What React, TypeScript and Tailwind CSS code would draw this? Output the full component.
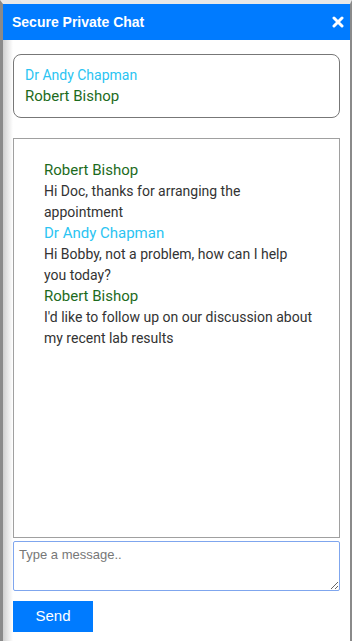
// Lines kept as they wrap in the chat window
const messages = [
  { from: "patient", name: "Robert Bishop", lines: ["Hi Doc, thanks for arranging the", "appointment"] },
  { from: "doctor", name: "Dr Andy Chapman", lines: ["Hi Bobby, not a problem, how can I help", "you today?"] },
  { from: "patient", name: "Robert Bishop", lines: ["I'd like to follow up on our discussion about", "my recent lab results"] },
];

const nameColor = (from: string) =>
  from === "doctor" ? "text-[#2bc4f2]" : "text-[#1d6b1d]";

function CloseIcon() {
  return (
    <svg viewBox="0 0 12 12" className="h-[12px] w-[12px]" fill="none" stroke="white" strokeWidth={3} strokeLinecap="round">
      <path d="M2 2l8 8M10 2l-8 8" />
    </svg>
  );
}

export default function App() {
  return (
    <div className="h-[641px] w-[352px] bg-white font-['Roboto',sans-serif]">
      <div className="flex h-full flex-col border-t-[4px] border-r-2 border-l-[3px] border-t-[#e8e8e8] border-r-[#8a8a8a] border-l-[#8a8a8a]">
        {/* header */}
        <div className="flex h-9 shrink-0 items-center justify-between bg-[#007bff] pr-[6px] pl-[9px]">
          <span className="font-['Liberation_Sans',sans-serif] text-[14px] font-bold text-white">
            Secure Private Chat
          </span>
          <CloseIcon />
        </div>

        <div className="flex flex-1 flex-col bg-[linear-gradient(to_right,#cfcfcf,#ffffff_10px)] px-[10px] pt-[14px]">
          {/* participants */}
          <div className="rounded-lg border border-[#777] bg-white px-[11px] pt-[10px] pb-[10px] text-[14px] leading-[21px]">
            <div className={nameColor("doctor")}>Dr Andy Chapman</div>
            <div className={`${nameColor("patient")} text-[15px]`}>Robert Bishop</div>
          </div>

          {/* messages */}
          <div className="mt-5 h-[400px] border border-[#a0a0a0] bg-white pt-[21px] pr-6 pl-[30px] text-[14px] leading-[21px] whitespace-nowrap">
            {messages.map((m, i) => (
              <div key={i}>
                <div className={`${nameColor(m.from)} text-[15px]`}>{m.name}</div>
                {m.lines.map((l) => (
                  <div key={l} className="text-[#333]">{l}</div>
                ))}
              </div>
            ))}
          </div>

          {/* input */}
          <textarea
            className="mt-[3px] h-[50px] w-full resize-y rounded-[2px] border border-[#7fa6ee] bg-white px-[5px] py-[3px] font-['Liberation_Sans',sans-serif] text-[13px] text-[#333] outline-none placeholder:text-[#777]"
            placeholder="Type a message.."
            autoFocus
          />

          <button className="mt-[10px] h-[31px] w-20 bg-[#007bff] font-['Liberation_Sans',sans-serif] text-[15px] text-white">
            Send
          </button>
        </div>
      </div>
    </div>
  );
}
